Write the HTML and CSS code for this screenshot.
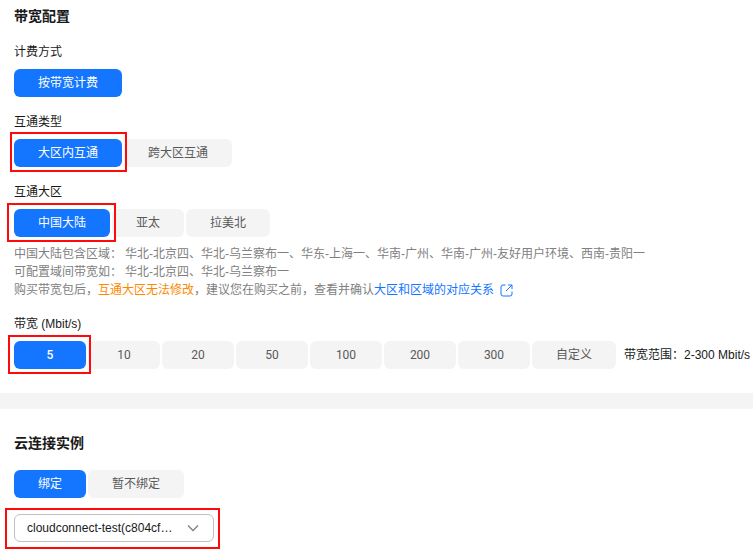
FILE: index.html
```html
<!DOCTYPE html>
<html lang="zh-CN">
<head>
<meta charset="utf-8">
<title>带宽配置</title>
<link rel="stylesheet" href="styles.css">
</head>
<body>
<main>
  <section class="panel">
    <h2>带宽配置</h2>
    <div class="field">
      <h3 id="billing">计费方式</h3>
      <div class="options" role="group" aria-labelledby="billing">
        <button type="button" class="option selected">按带宽计费</button>
      </div>
    </div>
    <div class="field">
      <h3 id="type">互通类型</h3>
      <div class="options" role="group" aria-labelledby="type">
        <div class="marked mark-type"><button type="button" class="option selected">大区内互通</button></div>
        <button type="button" class="option">跨大区互通</button>
      </div>
    </div>
    <div class="field">
      <h3 id="region">互通大区</h3>
      <div class="options" role="group" aria-labelledby="region">
        <div class="marked mark-region"><button type="button" class="option selected">中国大陆</button></div>
        <button type="button" class="option">亚太</button>
        <button type="button" class="option">拉美北</button>
      </div>
      <div class="notes">
        <p><span class="term">中国大陆包含区域：</span>华北-北京四、华北-乌兰察布一、华东-上海一、华南-广州、华南-广州-友好用户环境、西南-贵阳一</p>
        <p><span class="term">可配置域间带宽如：</span>华北-北京四、华北-乌兰察布一</p>
        <p>购买带宽包后，<span class="warning">互通大区无法修改</span>，建议您在购买之前，查看并确认<a href="#">大区和区域的对应关系<svg class="external" viewBox="0 0 13 13" aria-hidden="true"><path d="M5.500 1H3a2 2 0 0 0-2 2v7a2 2 0 0 0 2 2h7a2 2 0 0 0 2-2V7.500M8 1h4v4M12 1 6 7"/></svg></a></p>
      </div>
    </div>
    <div class="field">
      <h3 id="bandwidth">带宽 (Mbit/s)</h3>
      <div class="options" role="group" aria-labelledby="bandwidth">
        <div class="marked mark-size"><button type="button" class="option number selected">5</button></div>
        <button type="button" class="option number">10</button>
        <button type="button" class="option number">20</button>
        <button type="button" class="option number">50</button>
        <button type="button" class="option number">100</button>
        <button type="button" class="option number">200</button>
        <button type="button" class="option number">300</button>
        <button type="button" class="option">自定义</button>
        <span class="range">带宽范围：2-300 Mbit/s</span>
      </div>
    </div>
  </section>
  <section class="panel">
    <h2 id="instance">云连接实例</h2>
    <div class="options" role="group" aria-labelledby="instance">
      <button type="button" class="option selected">绑定</button>
      <button type="button" class="option">暂不绑定</button>
    </div>
    <div class="marked mark-select picker">
      <select aria-labelledby="instance"><option>cloudconnect-test(c804cf…</option></select>
      <svg class="chevron" viewBox="0 0 12 8" aria-hidden="true"><path d="m1 1.500 5 5 5-5"/></svg>
    </div>
  </section>
</main>
</body>
</html>
```
FILE: styles.css
```css
* {
  box-sizing: border-box;
}

body {
  margin: 0;
  background: #f4f4f4;
  color: #191919;
  font: 12px/18px "Liberation Sans", "Noto Sans CJK SC", sans-serif;
}

main {
  display: flex;
  flex-direction: column;
  gap: 16px;
  min-height: 100vh;
}

.panel {
  padding: 6px 0 24px 14px;
  background: #fff;
}

.panel + .panel {
  flex: 1;
  padding-top: 24px;
}

h2,
h3,
p {
  margin: 0;
}

h2 {
  margin-bottom: 16px;
  font-size: 14px;
  line-height: 21px;
}

h3 {
  margin-bottom: 8px;
  font-size: 12px;
  font-weight: 400;
}

.field + .field {
  margin-top: 16px;
}

.options {
  display: flex;
  align-items: center;
  gap: 2px;
}

.option {
  flex: none;
  height: 28px;
  padding: 0 24px;
  border: 0;
  border-radius: 6px;
  background: #f4f4f4;
  color: #595959;
  font: inherit;
  white-space: nowrap;
}

.number {
  width: 72px;
  font-family: Roboto, sans-serif;
}

.option.selected {
  background: #1476ff;
  color: #fff;
}

.number.selected {
  font-weight: 500;
}

.marked {
  position: relative;
  display: flex;
}

/* Red callout frames drawn over the neighbouring controls */
.marked::after {
  content: "";
  position: absolute;
  inset: -6px;
  border: 2px solid #ff0a0a;
  pointer-events: none;
}

.mark-type::after {
  inset: -7px -5px -5px -4px;
}

.mark-region::after {
  inset: -6px -6px -5px -7px;
}

.mark-size::after {
  inset: -6px -5px -5px -6px;
}

.mark-select::after {
  inset: -6px -6px -7px -9px;
}

.notes {
  margin-top: 8px;
  color: #808080;
}

.term {
  margin-right: 3px;
}

.warning {
  color: #ff8800;
}

a {
  color: #1476ff;
  text-decoration: none;
}

svg {
  fill: none;
  stroke: currentColor;
}

.external {
  width: 13px;
  height: 13px;
  margin-left: 6px;
  vertical-align: -3px;
}

.range {
  margin-left: 6px;
  white-space: nowrap;
}

.picker {
  width: 200px;
  margin-top: 16px;
}

select {
  width: 100%;
  height: 28px;
  padding: 0 36px 0 12px;
  border: 1px solid #c2c2c2;
  border-radius: 6px;
  appearance: none;
  background: #fff;
  color: #191919;
  font: inherit;
}

.chevron {
  position: absolute;
  top: 10px;
  right: 15px;
  width: 12px;
  height: 8px;
  color: #808080;
  stroke-width: 1.3;
  pointer-events: none;
}
```
